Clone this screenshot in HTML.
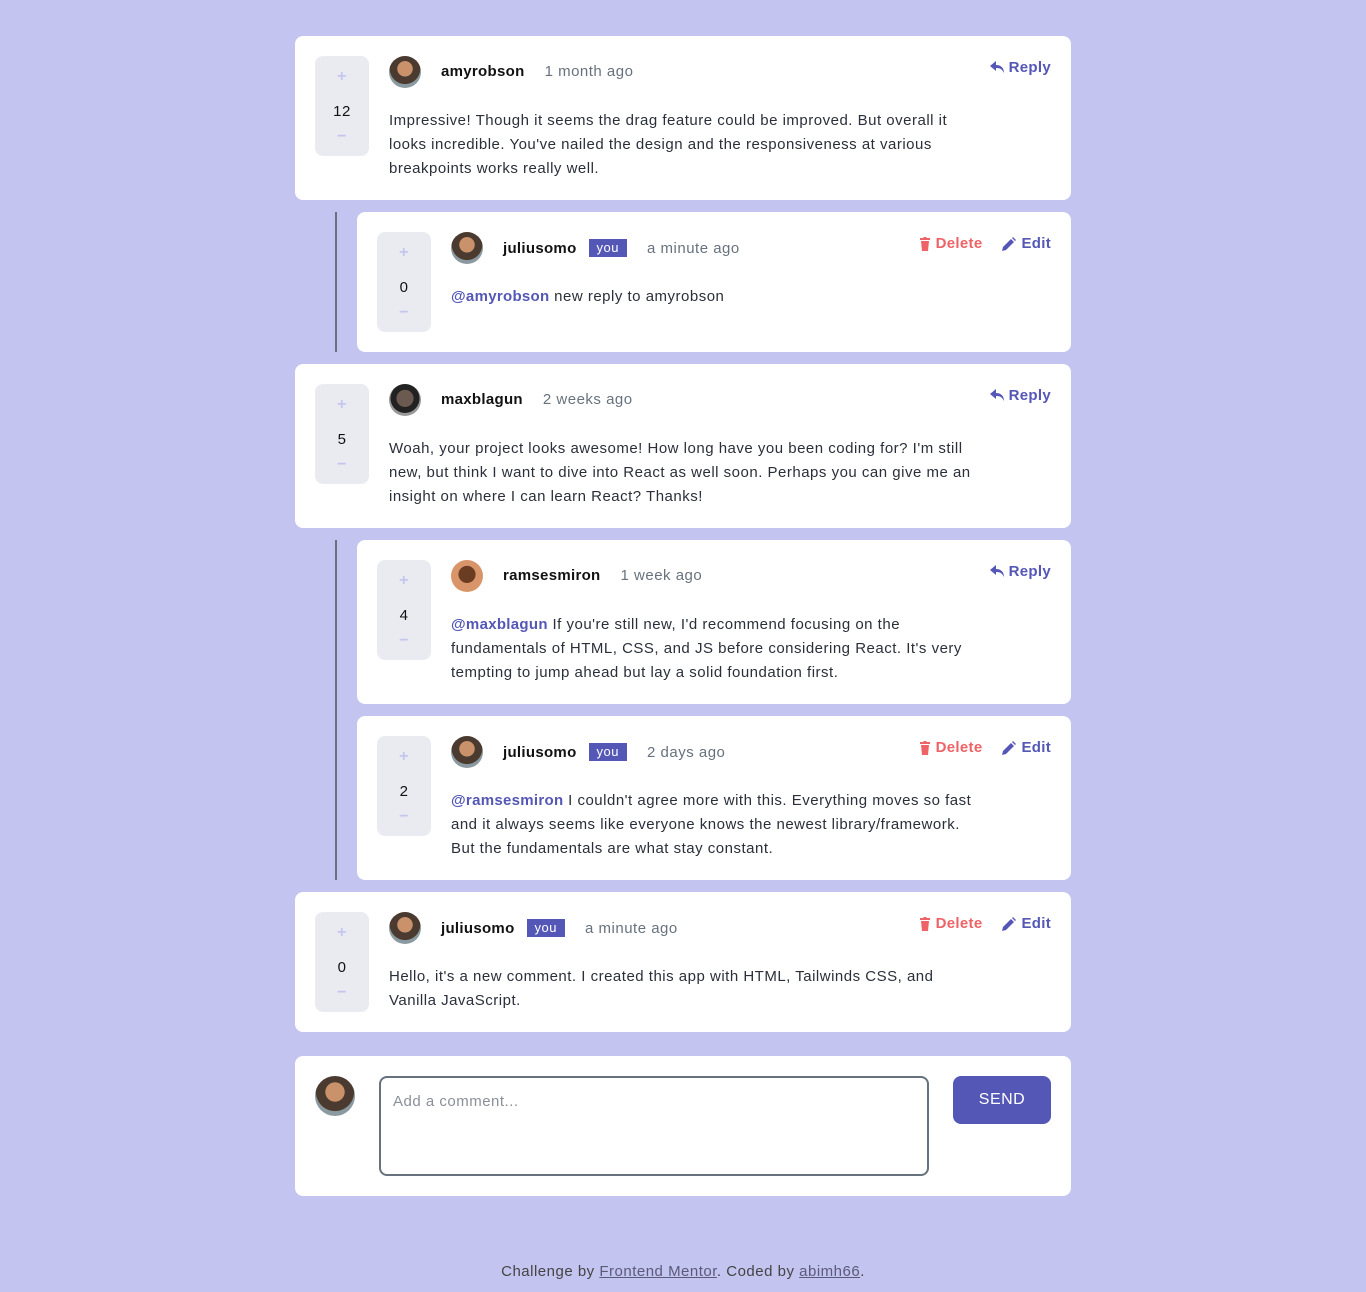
<!DOCTYPE html>
<html><head><meta charset="utf-8"><style>
*{box-sizing:border-box;margin:0;padding:0}
body{width:1366px;height:1292px;background:#c4c4f0;font-family:"Liberation Sans",sans-serif;position:relative;color:#334253;letter-spacing:0.5px}
.card{position:absolute;background:#fff;border-radius:8px}
.c{left:295px;width:776px}
.r{left:357px;width:714px}
.vote{position:absolute;left:20px;top:20px;width:54px;height:100px;background:#eaebf1;border-radius:8px;text-align:center;color:#111;font-size:15px}
.vote .p,.vote .m{position:absolute;left:0;width:54px;color:#c5c6ef;font-weight:bold;font-size:16px}
.vote .p{top:12px}.vote .m{top:72px}
.vote .n{position:absolute;top:47px;left:0;width:54px}
.av{position:absolute;left:94px;top:20px;width:32px;height:32px;border-radius:50%;background:radial-gradient(circle at 50% 40%,#c9926b 0 30%,#4a3a30 32% 60%,#8a9aa0 62%)}
.hd{position:absolute;left:146px;top:27px;font-size:15px;display:flex;align-items:center;white-space:nowrap}
.hd b{color:#111;margin-right:20px;letter-spacing:0.3px}
.you{background:#5457b6;color:#fff;font-size:13px;padding:1px 8px 2px;margin-right:20px;margin-left:-8px}
.tm{color:#67727e}
.tx{position:absolute;left:94px;top:73px;white-space:nowrap;font-size:15px;line-height:24px;color:#2a2f3a}
.at{color:#5457b6;font-weight:bold;letter-spacing:0.3px}
.act{position:absolute;right:20px;top:23px;font-size:15px;font-weight:bold;display:flex;gap:20px;align-items:center;letter-spacing:0.3px}
.act span{display:flex;align-items:center;gap:5px}
.rep{color:#5457b6}.del{color:#ed6368}.ed{color:#5457b6}
.line{position:absolute;left:335px;width:2px;background:#67727e}
</style></head><body>
<div class="line" style="top:212px;height:140px"></div>
<div class="line" style="top:540px;height:340px"></div>

<div class="card c" style="top:36px;height:164px">
<div class="vote"><span class="p">+</span><span class="n">12</span><span class="m">−</span></div>
<div class="av"></div>
<div class="hd"><b>amyrobson</b><span class="tm">1 month ago</span></div>
<div class="act"><span class="rep"><svg width="14" height="13" viewBox="0 0 14 13"><path d="M6 0L0 5l6 5V7c4 0 6 1 8 5 0-5-3-8-8-8z" fill="#5457b6"/></svg>Reply</span></div>
<div class="tx">Impressive! Though it seems the drag feature could be improved. But overall it<br>looks incredible. You've nailed the design and the responsiveness at various<br>breakpoints works really well.</div>
</div>

<div class="card r" style="top:212px;height:140px">
<div class="vote"><span class="p">+</span><span class="n">0</span><span class="m">−</span></div>
<div class="av"></div>
<div class="hd"><b>juliusomo</b><span class="you">you</span><span class="tm">a minute ago</span></div>
<div class="act"><span class="del"><svg width="12" height="14" viewBox="0 0 12 14"><path d="M1 1h3l1-1h2l1 1h3v2H1zM2 4h8l-1 10H3z" fill="#ed6368"/></svg>Delete</span><span class="ed"><svg width="14" height="14" viewBox="0 0 14 14"><path d="M0 14l1-4 8-8 3 3-8 8zM10 1l1-1 3 3-1 1z" fill="#5457b6"/></svg>Edit</span></div>
<div class="tx"><span class="at">@amyrobson</span> new reply to amyrobson</div>
</div>

<div class="card c" style="top:364px;height:164px">
<div class="vote"><span class="p">+</span><span class="n">5</span><span class="m">−</span></div>
<div class="av" style="background:radial-gradient(circle at 50% 45%,#6b5a50 0 35%,#222 37% 60%,#999 62%)"></div>
<div class="hd"><b>maxblagun</b><span class="tm">2 weeks ago</span></div>
<div class="act"><span class="rep"><svg width="14" height="13" viewBox="0 0 14 13"><path d="M6 0L0 5l6 5V7c4 0 6 1 8 5 0-5-3-8-8-8z" fill="#5457b6"/></svg>Reply</span></div>
<div class="tx">Woah, your project looks awesome! How long have you been coding for? I'm still<br>new, but think I want to dive into React as well soon. Perhaps you can give me an<br>insight on where I can learn React? Thanks!</div>
</div>

<div class="card r" style="top:540px;height:164px">
<div class="vote"><span class="p">+</span><span class="n">4</span><span class="m">−</span></div>
<div class="av" style="background:radial-gradient(circle at 50% 45%,#6a3d22 0 35%,#d9956a 37%)"></div>
<div class="hd"><b>ramsesmiron</b><span class="tm">1 week ago</span></div>
<div class="act"><span class="rep"><svg width="14" height="13" viewBox="0 0 14 13"><path d="M6 0L0 5l6 5V7c4 0 6 1 8 5 0-5-3-8-8-8z" fill="#5457b6"/></svg>Reply</span></div>
<div class="tx"><span class="at">@maxblagun</span> If you're still new, I'd recommend focusing on the<br>fundamentals of HTML, CSS, and JS before considering React. It's very<br>tempting to jump ahead but lay a solid foundation first.</div>
</div>

<div class="card r" style="top:716px;height:164px">
<div class="vote"><span class="p">+</span><span class="n">2</span><span class="m">−</span></div>
<div class="av"></div>
<div class="hd"><b>juliusomo</b><span class="you">you</span><span class="tm">2 days ago</span></div>
<div class="act"><span class="del"><svg width="12" height="14" viewBox="0 0 12 14"><path d="M1 1h3l1-1h2l1 1h3v2H1zM2 4h8l-1 10H3z" fill="#ed6368"/></svg>Delete</span><span class="ed"><svg width="14" height="14" viewBox="0 0 14 14"><path d="M0 14l1-4 8-8 3 3-8 8zM10 1l1-1 3 3-1 1z" fill="#5457b6"/></svg>Edit</span></div>
<div class="tx"><span class="at">@ramsesmiron</span> I couldn't agree more with this. Everything moves so fast<br>and it always seems like everyone knows the newest library/framework.<br>But the fundamentals are what stay constant.</div>
</div>

<div class="card c" style="top:892px;height:140px">
<div class="vote"><span class="p">+</span><span class="n">0</span><span class="m">−</span></div>
<div class="av"></div>
<div class="hd"><b>juliusomo</b><span class="you">you</span><span class="tm">a minute ago</span></div>
<div class="act"><span class="del"><svg width="12" height="14" viewBox="0 0 12 14"><path d="M1 1h3l1-1h2l1 1h3v2H1zM2 4h8l-1 10H3z" fill="#ed6368"/></svg>Delete</span><span class="ed"><svg width="14" height="14" viewBox="0 0 14 14"><path d="M0 14l1-4 8-8 3 3-8 8zM10 1l1-1 3 3-1 1z" fill="#5457b6"/></svg>Edit</span></div>
<div class="tx">Hello, it's a new comment. I created this app with HTML, Tailwinds CSS, and<br>Vanilla JavaScript.</div>
</div>

<div class="card c" style="top:1056px;height:140px">
<div class="av" style="left:20px;width:40px;height:40px"></div>
<div style="position:absolute;left:84px;top:20px;width:550px;height:100px;border:2px solid #67727e;border-radius:8px;padding:15px 12px;color:#8a8f98;font-size:15px">Add a comment...</div>
<div style="position:absolute;right:20px;top:20px;width:98px;height:48px;background:#5457b6;border-radius:8px;color:#fff;font-size:16px;text-align:center;line-height:48px">SEND</div>
</div>

<div style="position:absolute;top:1263px;left:0;width:1366px;text-align:center;font-size:15px;color:#444">Challenge by <u style="color:#5a5a7a">Frontend Mentor</u>. Coded by <u style="color:#5a5a7a">abimh66</u>.</div>
</body></html>
